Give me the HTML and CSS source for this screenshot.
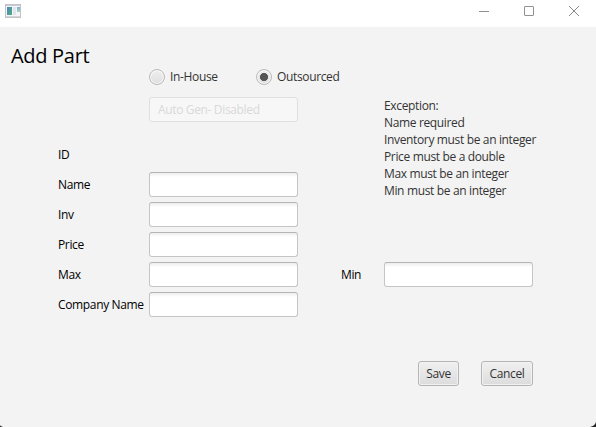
FILE: index.html
```html
<!DOCTYPE html>
<html lang="en">
<head>
<meta charset="utf-8">
<title>Add Part</title>
<link rel="stylesheet" href="styles.css">
</head>
<body>
<div class="window">
  <header class="titlebar">
    <svg class="app-icon" width="16" height="14" viewBox="0 0 16 14">
      <defs>
        <linearGradient id="pane" x1="0" y1="0" x2="1" y2="1"><stop offset="0" stop-color="#4d86b8"/><stop offset="1" stop-color="#4fae82"/></linearGradient>
        <linearGradient id="side" x1="0" y1="0" x2="0" y2="1"><stop offset="0" stop-color="#7faed4"/><stop offset="1" stop-color="#a9d7b4"/></linearGradient>
      </defs>
      <rect x="0.5" y="0.5" width="15" height="13" fill="#f4f5f8" stroke="#c0c3c9"/>
      <path d="M1 1.5h14" stroke="#c9ccd2"/>
      <rect x="2" y="3" width="5" height="8" fill="url(#pane)"/>
      <rect x="8" y="3" width="3" height="8" fill="#e2e4ea"/>
      <rect x="12" y="3" width="3" height="5" fill="url(#side)"/>
      <path d="M1 12.5h14" stroke="#d2d5da"/>
    </svg>
    <div class="window-controls">
      <svg width="10" height="10" viewBox="0 0 10 10"><path d="M0 5.5h10" stroke="#909090"/></svg>
      <svg width="10" height="10" viewBox="0 0 10 10"><rect x="0.5" y="0.5" width="9" height="9" rx="0.5" fill="none" stroke="#909090"/></svg>
      <svg width="10" height="10" viewBox="0 0 10 10"><path d="M0 0L10 10M10 0L0 10" stroke="#888"/></svg>
    </div>
  </header>
  <main class="content">
    <div class="heading">
      <h1>Add Part</h1>
      <div class="radio in-house"><span class="dot"></span><span class="radio-text">In-House</span></div>
      <div class="radio outsourced"><span class="dot selected"></span><span class="radio-text">Outsourced</span></div>
    </div>
    <div class="form">
      <div class="errors">
        <div>Exception:</div>
        <div>Name required</div>
        <div>Inventory must be an integer</div>
        <div>Price must be a double</div>
        <div>Max must be an integer</div>
        <div>Min must be an integer</div>
      </div>
      <label class="row-id">ID</label><div class="field disabled">Auto Gen- Disabled</div>
      <label>Name</label><div class="field"></div>
      <label>Inv</label><div class="field"></div>
      <label>Price</label><div class="field"></div>
      <label>Max</label><div class="field"></div>
      <label class="min-label">Min</label><div class="field min-field"></div>
      <label>Company Name</label><div class="field"></div>
    </div>
    <div class="actions">
      <button class="save">Save</button>
      <button class="cancel">Cancel</button>
    </div>
  </main>
  <svg class="corner left" width="5" height="2" viewBox="0 0 5 2"><path d="M0 0Q1 2 5 2H0Z" fill="#333"/></svg>
  <svg class="corner right" width="6" height="5" viewBox="0 0 6 5"><path d="M6 0Q5 4 0 5H6Z" fill="#222"/></svg>
</div>
</body>
</html>
```
FILE: styles.css
```css
* { box-sizing: border-box; }
body {
  margin: 0;
  font: 12px/17px "Open Sans", "Noto Sans", sans-serif;
  letter-spacing: -0.35px;
  color: #333;
}
.window {
  position: relative;
  width: 596px;
  height: 427px;
  overflow: hidden;
  background: #f3f3f3;
}
.titlebar {
  display: flex;
  justify-content: space-between;
  height: 27px;
  padding: 4px 17px 0 5px;
  background: #fff;
}
.app-icon { display: block; }
.window-controls { display: flex; gap: 35px; padding-top: 2px; }
.window-controls svg { display: block; overflow: visible; }
.heading { display: flex; height: 70px; padding-left: 11px; }
h1 {
  width: 138px;
  margin: 15px 0 0;
  font-size: 20px;
  font-weight: 400;
  line-height: 28px;
  letter-spacing: -0.3px;
  color: #000;
}
.radio { display: flex; align-items: center; gap: 5px; height: 17px; margin-top: 41px; white-space: nowrap; }
.in-house { width: 107px; }
.dot {
  width: 16px;
  height: 16px;
  border: 1px solid #bababa;
  border-radius: 50%;
  background: linear-gradient(#f0f0f0, #dedede);
  box-shadow: inset 0 0 0 1px #f7f7f7;
}
.dot.selected { background: radial-gradient(circle, #555 3.7px, transparent 4.4px), linear-gradient(#f0f0f0, #dedede); }
.form {
  display: grid;
  grid-template-columns: 91px 149px 43px 149px;
  grid-template-rows: 40px repeat(6, 25px);
  row-gap: 5px;
  padding-left: 58px;
}
.form label { grid-column: 1; line-height: 25px; color: #000; white-space: nowrap; }
.form .field { grid-column: 2; }
.form .min-label { grid-column: 3; grid-row: 6; }
.form .min-field { grid-column: 4; grid-row: 6; }
.form { column-gap: 0; grid-template-columns: 91px 192px 43px 149px; }
.errors { grid-column: 4; grid-row: 1 / 5; white-space: nowrap; }
.row-id { grid-row: 2; }
.field {
  width: 149px;
  height: 25px;
  padding-left: 8px;
  border: 1px solid #c5c5c5;
  border-top-color: #b5b5b5;
  border-radius: 3px;
  background: linear-gradient(#ededed, #fff 4px);
  line-height: 24px;
}
.field.disabled { border-color: #e0e0e0; background: #f7f7f7; color: #d9d9d9; }
.actions { display: flex; gap: 22px; padding: 44px 0 0 418px; }
button {
  height: 25px;
  padding: 0;
  border: 1px solid #b5b5b5;
  border-radius: 3px;
  background: linear-gradient(#f0f0f0, #dcdcdc);
  box-shadow: inset 0 0 0 1px #f2f2f2;
  font: inherit;
  letter-spacing: inherit;
  color: #333;
}
.save { width: 41px; }
.cancel { width: 52px; }
.corner { position: absolute; bottom: 0; }
.left { left: 0; }
.right { right: 0; }
```
